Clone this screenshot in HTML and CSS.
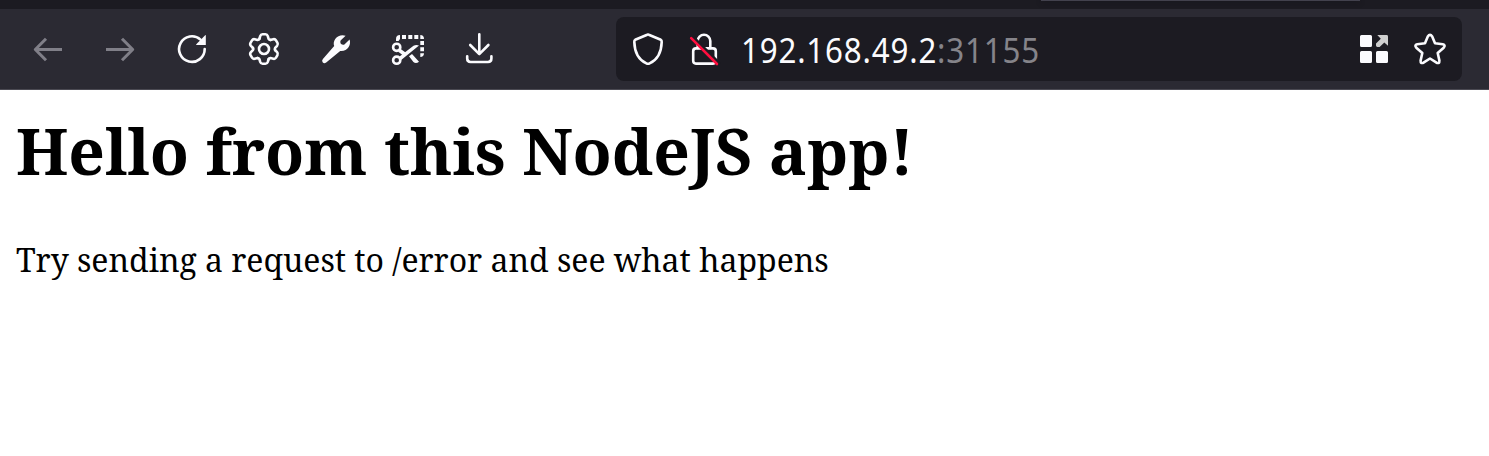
FILE: index.html
```html
<!DOCTYPE html>
<html lang="en">
<head>
<meta charset="utf-8">
<title>Hello from this NodeJS app!</title>
<link rel="stylesheet" href="styles.css">
</head>
<body>
<div class="tabs"><div class="tab-edge"></div></div>
<nav class="toolbar">
  <div class="buttons">
    <svg class="icon dim" viewBox="0 0 32 32"><path d="M30 16.5H3.5M14 5.7 3.3 16.5 14 27.3"/></svg>
    <svg class="icon dim" viewBox="0 0 32 32"><path d="M2 16.5H28.5M18 5.7 28.7 16.5 18 27.3"/></svg>
    <svg class="icon" viewBox="0 0 32 32"><path d="M28.7 16A12.8 12.8 0 1 1 24.5 6.6"/><path class="solid" d="M29.2 2.2Q29.8 1.6 29.8 2.6V12H20.6Q19.6 12 20.3 11.2Z"/></svg>
    <svg class="icon" viewBox="-16 -16 32 32">
      <defs><path id="tooth" d="M-4.6-10.2 -3.8-12.9Q-3.2-14.7-1.5-14.7H1.5Q3.2-14.7 3.8-12.9L4.6-10.2Q5.3-8.9 6.5-9.1"/></defs>
      <circle r="5"/>
      <use href="#tooth"/><use href="#tooth" transform="rotate(60)"/><use href="#tooth" transform="rotate(120)"/><use href="#tooth" transform="rotate(180)"/><use href="#tooth" transform="rotate(240)"/><use href="#tooth" transform="rotate(300)"/>
    </svg>
    <svg class="icon" viewBox="0 0 32 32"><path class="solid" d="M25.6 2.7 20.6 7.6Q19.8 9 20.8 10.8 22.6 12.4 24.4 11.6L29.6 6.6C31.4 12.5 27.4 18.7 20.2 18L6.2 29.4Q4.3 30.9 2.8 29.5 1.3 27.9 2.9 26L14.2 13C12 7.2 18.3.2 25.6 2.7Z"/></svg>
    <svg class="icon" viewBox="0 0 32 32">
      <path class="solid" d="M4 8V6Q4 2 8 2V6L6.5 8ZM10 2h4v4h-4ZM16.3 2h4v4h-4ZM22.3 2h4v4h-4ZM28.3 2Q32 2 32 6H28.3ZM28.3 8h3.7v4h-3.7ZM28.3 14.3h3.7v4h-3.7ZM28.3 20.3H32Q32 24 28.3 24Z"/>
      <circle cx="4.7" cy="14.3" r="3.6"/><circle cx="4.7" cy="27.2" r="3.6"/>
      <path class="solid" d="M6.9 24 21.5 12.8Q24 11.2 27 12.4L9.2 27ZM7.6 15.2 15 20.6 11.6 22.8 6.2 18.8ZM17 23.2 20 21 27 28.7Q24 31 21.4 29Z"/>
    </svg>
    <svg class="icon" viewBox="0 0 32 32"><path d="M15.3 1.2V21M6.2 12 15.3 21.2 24.4 12M3.2 23.3V25.6Q3.2 29 6.6 29H24Q27.4 29 27.4 25.6V23.3"/></svg>
  </div>
  <div class="field">
    <svg class="icon" viewBox="0 0 32 32"><path d="M15.2 1.7 3.2 6.8Q2.2 7.4 2.3 9C2.6 19 7 27 14.4 30.4Q16 31.2 17.6 30.4C25 27 29.4 19 29.7 9Q29.8 7.4 28.8 6.8L16.8 1.7Q16 1.3 15.2 1.7Z"/></svg>
    <svg class="icon" viewBox="0 0 32 32"><rect x="5.2" y="15.4" width="22.6" height="15.2" rx="2.8"/><path d="M9.7 15V8A6.3 6.3 0 0 1 22.3 8V15"/><path class="gap" d="M5.4 4.4 31 30"/><path class="slash" d="M3.2 5.2 29 31"/></svg>
    <div class="url">192.168.49.2<span class="port">:31155</span></div>
    <svg class="icon" viewBox="0 0 32 32"><path class="solid" d="M3.5 2h9Q14 2 14 3.5v9Q14 14 12.5 14h-9Q2 14 2 12.5v-9Q2 2 3.5 2ZM3.5 18h9q1.5 0 1.5 1.5v9q0 1.5-1.5 1.5h-9Q2 30 2 28.5v-9Q2 18 3.5 18ZM19.5 18h9q1.5 0 1.5 1.5v9q0 1.5-1.5 1.5h-9q-1.5 0-1.5-1.5v-9q0-1.5 1.5-1.5Z"/><path class="arrow" d="M19.3 2H28.6Q30 2 30 3.4V12.8L26.3 9.5 21.6 14H19.4Q18 14 18 12.6V10.6L22.8 5.8Z"/></svg>
    <svg class="icon star" viewBox="0 0 32 32"><path d="M13.8 3.5Q16 .2 18.2 3.5L21 10.3 28.8 11.2Q31.9 12 29.7 14.7L23.7 20 25.4 27.6Q25.6 31 22.5 29.7L16 25.5 9.5 29.7Q6.4 31 6.6 27.6L8.3 20 2.3 14.7Q.1 12 3.2 11.2L11 10.3Z"/></svg>
  </div>
</nav>
<main class="page">
  <h1 class="title">Hello from this NodeJS app!</h1>
  <p class="text">Try sending a request to /error and see what happens</p>
</main>
</body>
</html>
```
FILE: styles.css
```css
* { box-sizing: border-box; }
body { margin: 0; height: 456px; overflow: hidden; background: #fff; color: #000; }
.tabs { height: 9px; padding-left: 1041px; background: #1c1b22; }
.tab-edge { width: 319px; height: 1px; background: #42414d; box-shadow: 0 1px 5px #131218; }
.toolbar { display: flex; height: 81px; padding: 8px 27px 8px 32px; background: #2b2a33; border-bottom: 1px solid #4b4a53; }
.buttons { display: flex; align-items: center; gap: 40px; width: 584px; }
.icon { display: block; flex: none; width: 32px; height: 32px; overflow: visible; fill: none; stroke: #fbfbfe; stroke-width: 2.6; stroke-linecap: round; stroke-linejoin: round; }
.icon .solid { fill: #fbfbfe; stroke: none; }
.icon .arrow { fill: #cfcfcf; stroke: none; }
.icon .gap { stroke: #1c1b22; stroke-width: 3; }
.icon .slash { stroke: #ff0f3f; stroke-width: 2.6; }
.icon.dim { stroke: #807f88; stroke-width: 3; stroke-linecap: butt; }
.field { display: flex; flex: 1; align-items: center; height: 64px; padding: 0 16px; background: #1c1b22; border-radius: 8px; }
.field .icon + .icon { margin-left: 24px; }
.url { flex: 1; margin-left: 21px; padding-top: 2px; color: #fbfbfe; font: 400 34px/64px "Noto Sans", "Open Sans", sans-serif; letter-spacing: 0.9px; white-space: nowrap; transform: scaleX(0.92); transform-origin: left; }
.port { color: #85848a; }
.page { padding: 19px 16px 0; font-family: "Noto Serif", "DejaVu Serif", serif; white-space: nowrap; }
.title { margin: 0; font-size: 64px; line-height: 84px; font-weight: 700; letter-spacing: -0.06px; }
.text { margin: 45px 0 0; font-size: 32px; line-height: 44px; letter-spacing: -0.03px; }
```
